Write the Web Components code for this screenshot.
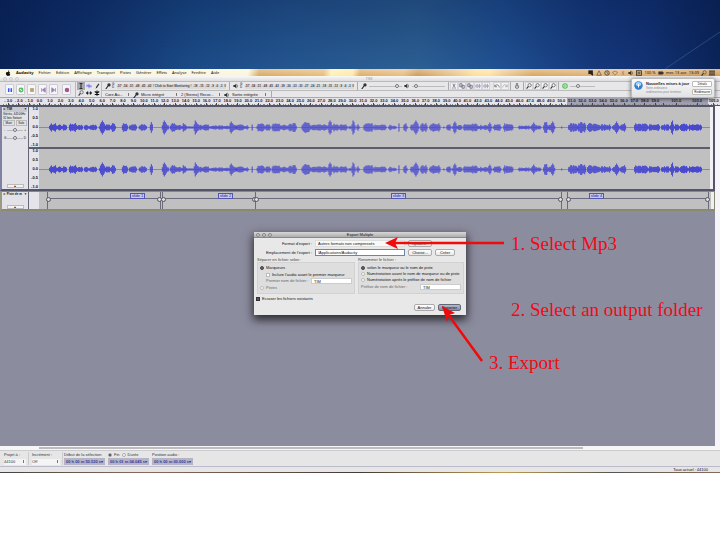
<!DOCTYPE html>
<html lang="fr">
<head>
<meta charset="utf-8">
<title>Audacity – Export Multiple</title>
<style>
html,body{margin:0;height:100%}
body{background:#fff;font:4px/6px "Liberation Sans",Arial,sans-serif;color:#111}
</style>
</head>
<body>
<tutorial-slide></tutorial-slide>
<script>
const BASE = `
*{box-sizing:border-box}
:host{display:block;box-sizing:border-box}
button,input,select{font:inherit;color:inherit;margin:0;padding:0;border:0;background:none;border-radius:0;min-width:0}
select{appearance:none}
svg{display:block;flex:none}
input[type=range]{appearance:none;height:6px;background:linear-gradient(#bbb,#bbb) 0 3px/100% 1px no-repeat}
input[type=range]::-webkit-slider-thumb{appearance:none;width:4px;height:4px;border-radius:50%;border:1px solid #777;background:#eee}
`;
function define(name, css, html, setup){
  customElements.define(name, class extends HTMLElement{
    constructor(){
      super();
      this.attachShadow({mode:'open'}).innerHTML = `<style>${BASE}${css}</style>${html}`;
    }
    connectedCallback(){ if(setup) setup(this, this.shadowRoot); }
  });
}

const ICONS = {
  apple:'<path d="M4 3c1-1 2.400-.5 2.700.1-1 .8-.8 2.200.3 2.700C6.500 7 6 8 5.200 8 4.500 7.700 4 7.700 3.300 8 2.200 8 .7 5.300 1.300 3.800 1.800 2.600 3 2.500 4 3zM4 2.500C4 1.300 4.600.6 5.500.3 5.600 1.400 5 2.300 4 2.500z" fill="#111"/>',
  pause:'<path d="M2.300 1.500v5M5.700 1.500v5" stroke="#3658e8" stroke-width="2"/>',
  play:'<circle cx="4" cy="4" r="2.500" fill="none" stroke="#4cb84c" stroke-width="1.500"/><path d="M2 6l4-4" stroke="#4cb84c"/>',
  stop:'<rect x="1.500" y="1.500" width="5" height="5" fill="#b9a074"/>',
  back:'<path d="M7 1v6L3 4zM2 1.500v5" fill="#9a80b4" stroke="#9a80b4"/>',
  fwd:'<path d="M1 1v6l4-3zM6 1.500v5" fill="#9a80b4" stroke="#9a80b4"/>',
  rec:'<circle cx="4" cy="4" r="3" fill="#a5568c"/>',
  beam:'<path d="M2 .5h4M2 7.500h4M4 .5v7" stroke="#222" stroke-width="1.300"/>',
  env:'<path d="M0 4h8M4 1v6M1 2.500l6 3" stroke="#5b6cf0" fill="none"/>',
  pen:'<path d="M2 7.500L3 5 6 .8 7 1.500 4.200 6z" fill="#222"/>',
  zoom:'<circle cx="4.800" cy="3" r="2.200" fill="none" stroke="#555"/><path d="M3.200 4.600L.8 7.500" stroke="#333" stroke-width="1.400"/>',
  arrows:'<path d="M0 4l2.500-2v4zM8 4L5.500 2v4zM2 4h4" fill="#111" stroke="#111" stroke-width=".6"/>',
  star:'<path d="M4 .5v7M1 2l6 4M7 2L1 6" stroke="#111" stroke-width="1.500"/>',
  mic:'<path d="M4 4L1 8" stroke="#222" stroke-width="1.500"/><circle cx="5.300" cy="2.500" r="2.200" fill="#333"/>',
  spk:'<path d="M.5 2.800h2l2-2v6.400l-2-2h-2z" fill="#333"/><path d="M5.600 2q1.400 2 0 4" fill="none" stroke="#555" stroke-width=".8"/>',
  cut:'<path d="M2.500 1l2 4.500M5.500 1l-2 4.500" stroke="#667"/><circle cx="2.500" cy="6.500" r="1" fill="#88a"/><circle cx="5.500" cy="6.500" r="1" fill="#88a"/>',
  copy:'<path d="M1 1h3v4H1zM4 3h3v4H4z" fill="#d8d8e4" stroke="#667"/>',
  wave:'<path d="M0 4h1M1.500 2v4M3 1v6M4.500 2.500v3M6 1v6M7.200 3v2" stroke="#88a" stroke-width=".9"/>',
  undo:'<path d="M1 2v3h3M1.300 4.700C2 1.500 7 1.500 7 6" fill="none" stroke="#777" stroke-width="1.100"/>',
  redo:'<path d="M7 2v3H4M6.700 4.700C6 1.500 1 1.500 1 6" fill="none" stroke="#aaa" stroke-width="1.100"/>',
  lock:'<circle cx="4" cy="5" r="2.200" fill="none" stroke="#555"/><path d="M2.500 1h3M4 1v2M4 5V3.800" stroke="#555"/>',
  sync:'<circle cx="4" cy="4" r="3" fill="none" stroke="#52c052" stroke-width="1.400"/><path d="M3 2.500L5.500 4 3 5.500z" fill="#52c052"/>',
  box:'<rect x=".5" y=".5" width="6" height="5" fill="#222"/><path d="M2 2l4.500 5" stroke="#222" stroke-width="2"/>',
  tri:'<path d="M4 1l3 6H1z" fill="none" stroke="#654"/>',
  clock:'<circle cx="4" cy="4" r="3" fill="none" stroke="#333"/><path d="M4 2v2l1.500 1" fill="none" stroke="#333" stroke-width=".8"/>',
  wifi:'<path d="M.5 3q3.500-3 7 0L4 7z" fill="none" stroke="#876"/>',
  bt:'<path d="M2 2.500l3.500 3L4 7V1l1.500 1.500L2 5.500" fill="none" stroke="#a87" stroke-width=".8"/>',
  cal:'<rect x=".7" y="1" width="6.600" height="6" fill="none" stroke="#222"/><path d="M2 3h4M2 5h4" stroke="#222"/>',
  bat:'<rect x=".5" y="2" width="6" height="4" fill="#333"/><path d="M7.200 3v2" stroke="#333"/>',
  list:'<path d="M0 1.500h8M0 4h8M0 6.500h8" stroke="#222" stroke-width="1.300"/>'
};
customElements.define('ui-icon', class extends HTMLElement{
  constructor(){ super(); this.attachShadow({mode:'open'}); }
  connectedCallback(){
    const s = this.getAttribute('size') || 6;
    this.shadowRoot.innerHTML = `<style>:host{display:inline-flex;flex:none}svg{display:block}</style><svg width="${s}" height="${s}" viewBox="0 0 8 8" aria-hidden="true">${ICONS[this.getAttribute('name')]}</svg>`;
  }
});
const ic = (n,s) => `<ui-icon name="${n}" size="${s||6}"></ui-icon>`;

define('slide-banner', `
:host{height:69px;flex:none;background:
  linear-gradient(rgba(4,22,66,.3),rgba(4,22,66,0)),
  linear-gradient(90deg,#0a2458 0,#10316c 12%,#1a4a86 26%,#245690 40%,#2c5f93 58%,#1f5092 70%,#15397c 82%,#123274 90%,#0b2458)}
svg{width:60px;height:39px;margin-left:auto}
div{display:flex;height:100%;align-items:flex-end}`,
`<div><svg viewBox="0 0 60 39" aria-hidden="true"><path d="M5 39Q30 22 60 2" stroke="#3d5f98" stroke-opacity=".6" fill="none"/></svg></div>`);

define('mac-menubar', `
:host{flex:none;font-family:"Noto Sans","Liberation Sans",sans-serif;background:linear-gradient(rgba(255,255,255,.35),rgba(255,255,255,0)),
 linear-gradient(100deg,#faf5dc 0 34.500%,#d9aa62 36%,#e8bc78 45%,#fff0b4 46%,#ffe9a8 49%,#dfae66 50%,#e7bd80 56%,#cf9c5a 58%,#e9c48c 63%,#ffe09a 66%,#ffe2a0 68%,#edca92 70%,#d8a760 74%,#e2b478 86%,#d09c56)}
nav{display:flex;align-items:center;height:7px;padding:0 5px;gap:5px}
a{color:#111;text-decoration:none;white-space:nowrap}
b{font-weight:bold}
.r{margin-left:auto;display:flex;gap:2px;align-items:center;white-space:nowrap}`,
`<nav>${ic('apple')}<a href="#"><b>Audacity</b></a>${['Fichier','Edition','Affichage','Transport','Pistes','Générer','Effets','Analyse','Fenêtre','Aide'].map(t=>`<a href="#">${t}</a>`).join('')}
<span class="r">${['box','tri','clock','wifi','bt'].map(n=>ic(n)).join('')}${ic('spk')}${ic('cal')}<span>100 %</span>${ic('bat')}<span>mer. 13 avr.&ensp;13:09</span>${ic('zoom')}${ic('list')}</span></nav>`);

const combo = (label,t,c) => `<select class="${c}" aria-label="${label}"><option>${t}</option></select>`;
define('audio-toolbar', `
:host{flex:none;background:#e7e7ea}
.title{height:5px;line-height:5px;text-align:center;color:#999;background:linear-gradient(#f8f8f8,#dcdcdf);display:flex;align-items:center;gap:2px;padding:0 3px}
.title i{width:4px;height:4px;border:1px solid #ccc;border-radius:50%}
.title span{flex:1}
.bars{display:flex;height:17px;border-top:1px solid #bbb;border-bottom:1px solid #aaa}
.tr{display:flex;align-items:center;gap:2px;padding:0 4px 0 5px;border-right:1px solid #bbb}
.tr button{width:9px;height:11px;background:#f6f6f8;border:1px solid #ccccd2;border-radius:1px;display:grid;place-items:center}
.tr button:last-child{margin-left:2px}
.tools{display:grid;grid-template-columns:repeat(3,8px);border-right:1px solid #bbb;padding-left:1px}
.tools button{display:grid;place-items:center}
.tools .on{background:#a8a8ae}
.rows{flex:1;min-width:0;display:grid;grid-template-rows:9px 7px}
.row{display:flex;align-items:stretch}
.g{display:flex;align-items:center;gap:2px;padding:0 3px;border-right:1px solid #aaa;white-space:nowrap}
.row:first-child{border-bottom:1px solid #bbb}
.m{width:128px;border-right:1px solid #aaa;padding:0 3px;display:flex;align-items:center;gap:1px;white-space:nowrap}
.ch{font-size:3px;line-height:3px;width:4px}
.sc{flex:1;display:flex;justify-content:space-between;font-size:3px;font-weight:bold;color:#444;background:#dadadd;line-height:5px}
.g.s input{width:33px}
.g.last{border:0}.g.last input{width:25px}
.e{gap:0;padding:0 1px}
.e button{width:8px;height:8px;background:#f2f2f4;border:1px solid #d4d4d8;display:grid;place-items:center}
.gap{margin-left:3px}
select{height:6px;line-height:6px;background:linear-gradient(#777,#777) right 2px center/1px 3px no-repeat}
.w1{width:26px}.w2{width:38px}.w3{width:41px}.w4{width:36px}`,
`<div class="title"><i></i><i></i><i></i><span>TIM</span></div>
<div class="bars">
<div class="tr">${[['Pause','pause'],['Lecture','play'],['Stop','stop'],['Début','back'],['Fin','fwd'],['Enregistrer','rec']].map(b=>`<button aria-label="${b[0]}">${ic(b[1])}</button>`).join('')}</div>
<div class="tools">${['beam','env','pen','zoom','arrows','star'].map((n,i)=>`<button aria-label="Outil ${i+1}" class="${i?'':'on'}">${ic(n)}</button>`).join('')}</div>
<div class="rows">
<div class="row">
<div class="m">${ic('mic')}<span class="ch">G<br>D</span><span class="sc">${[-57,-54,-51,-48,-45,-42].map(n=>`<span>${n}</span>`).join('')}<span>! Click to Start Monitoring !</span>${[-18,-15,-12,-9,-6,-3,0].map(n=>`<span>${n}</span>`).join('')}</span></div>
<div class="m">${ic('spk')}<span class="ch">G<br>D</span><span class="sc">${Array.from({length:20},(_,i)=>`<span>${i*3-57}</span>`).join('')}</span></div>
<div class="g s">${ic('mic')}<input type="range" aria-label="Volume entrée" value="88">${ic('spk')}<input type="range" aria-label="Volume sortie" value="8"></div>
<div class="g e">${['cut','copy','copy','wave','wave'].map(n=>`<button aria-label="${n}">${ic(n)}</button>`).join('')}<span class="gap"></span><button aria-label="Annuler">${ic('undo')}</button><button aria-label="Refaire">${ic('redo')}</button></div>
<div class="g">${ic('lock')}</div><div class="g e">${['zoom','zoom','zoom','zoom'].map((n,i)=>`<button aria-label="Zoom ${i+1}">${ic(n)}</button>`).join('')}</div>
<div class="g last">${ic('sync')}<input type="range" aria-label="Vitesse" value="30"></div>
</div>
<div class="row"><div class="g">${combo('Hôte audio','Core Au...','w1')}${ic('mic')}${combo('Entrée','Micro intégré','w2')}${combo('Canaux','2 (Stereo) Recor...','w3')}${ic('spk')}${combo('Sortie','Sortie intégrée','w4')}</div></div>
</div></div>`);

define('time-ruler', `
:host{flex:none;background:#e4e4ea;border-bottom:1px solid #55556a}
div{display:flex;height:7px;padding-left:3px;font-weight:bold;line-height:5px;color:#222}
span{flex:1 1 0;min-width:0;display:flex;justify-content:center;white-space:nowrap;background:
 linear-gradient(#444,#444) center bottom/1px 2px no-repeat,repeating-linear-gradient(90deg,#888 0 1px,#0000 1px 3px) 0 100%/100% 1px no-repeat}
.w{flex-grow:2}.h{flex-grow:.5}.l{flex-grow:1.200}
.sel{background-color:#a2a2b2}`,
`<div></div>`, (el,r)=>{
  const cells=[];
  for(let i=-3;i<60;i++) cells.push(`<span class="${i>50?'sel':''}">${i<0?'- '+(-i):i}.0</span>`);
  r.querySelector('div').innerHTML = cells.join('')+'<span class="h sel"></span><span class="w sel">101.0</span><span class="w sel">103.0</span><span class="l">105.0</span>';
});

/* Speech bursts: [start, end, height, optional peak position] on a 672-unit timeline. */
const BURSTS=[[10,17,4],[18,22,3],[23,27,3],[30,37,4],[38,43,3],[45,49,3],[50,57,3],[60,66,7,63],[66,71,3],[72,76,4],[83,88,4],[90,97,3],[100,107,3],[111,113,5],[123,129,7,125],[131,137,4],[138,142,3],[143,147,4],[148,154,1],[155,162,7,156],[163,170,3],[171,189,2],[190,197,6,192],[197,205,3],[206,209,2],[213,213,3],[218,225,4],[226,231,3],[233,241,4],[242,248,3],[249,257,4],[263,271,5],[272,288,3],[289,293,7,291],[294,299,4],[300,308,3],[310,312,2],[313,316,7,314],[318,320,3],[325,334,4],[335,347,3],[350,353,3],[354,357,2],[360,360,5],[365,368,4],[372,380,7,377],[382,388,4],[391,401,4],[405,405,1],[408,412,3],[414,418,6,416],[419,423,3],[425,439,4],[440,453,5,451],[455,462,3],[465,474,4],[480,491,2],[492,502,5,495],[505,509,5],[510,516,6,514],[523,523,1],[530,539,4],[539,547,5],[549,561,4],[562,572,3],[574,581,6,578],[582,587,4],[596,609,4],[610,621,3],[623,631,3],[632,635,7,634],[636,641,3],[642,649,4],[650,663,3]];
const wavePath = (()=>{
  let d='';
  BURSTS.forEach(([a,b,h,p])=>{
    for(let x=a;x<=b;x++){
      const n=Math.abs(Math.sin(x*12.9898)*43758.5453)%1;
      let v = p===undefined ? h*(.65+.45*n) : Math.max(h-Math.abs(x-p)*1.600, h*.45*(.6+.6*n));
      if((x===a||x===b)&&a!==b) v*=.6;
      v=Math.max(1,v);
      d+=`M${x+.5} ${(20.5-v).toFixed(1)}v${(2*v).toFixed(1)}`;
    }
  });
  return d;
})();
const wave=`<svg viewBox="0 0 672 40" preserveAspectRatio="none" aria-hidden="true"><path d="M0 20.500h672" stroke="#8484c8" fill="none"/><path d="${wavePath}" stroke="#4646d0" fill="none"/></svg>`;
const scale=`<div class="scale"><span>1.0</span><span>0.5</span><span>0.0</span><span>-0.5</span><span>-1.0</span></div>`;

define('audio-track', `
:host{flex:none;background:#f6f6fa}
.t{display:grid;grid-template-columns:27px 10px 1fr 3px;margin-right:5px;border:2px solid #55556a;border-top-width:1px;border-left:2px solid #8080a0}
.p{background:#e2e2e8;border-right:1px solid #667;display:flex;flex-direction:column;padding:0 1px;line-height:4px;font-size:3px;white-space:nowrap;overflow:hidden}
.name{display:flex;justify-content:space-between;background:#c8c8d0;line-height:5px;font-weight:bold}
.ms{display:flex;gap:1px}.ms button{flex:1;border:1px solid #bbb;line-height:4px;height:6px}
.p label{display:flex;justify-content:space-between;margin:1px 1px 0;line-height:7px}
.p input{width:16px}
.p .up{margin:auto auto 1px;width:17px;height:4px;border:1px solid #bbb;background:#f2f2f4;line-height:2px}
.chs{display:grid;grid-template-rows:40px 40px;row-gap:2px;background:#5c5c6c}
.scale{display:flex;flex-direction:column;justify-content:space-between;text-align:right;padding-right:1px;font-weight:bold;font-size:4px;line-height:4px;background:#e4e4ea}
.w{background:#c0c0c0}
svg{width:100%;height:40px}
.end{background:#f0f0f2}`,
`<div class="t"><div class="p"><span class="name"><span>✕ TIM</span><span>▼</span></span><span>Stéréo, 44100Hz</span><span>32 bits flottant</span><div class="ms"><button>Muet</button><button>Solo</button></div>
<label>-<input type="range" aria-label="Gain">+</label><label>G<input type="range" aria-label="Balance">D</label><button class="up" aria-label="Réduire">▲</button></div>
<div class="chs">${scale}${scale}</div><div class="chs"><div class="w">${wave}</div><div class="w">${wave}</div></div><div class="end"></div></div>`);

define('label-track', `
:host{flex:none;background:#f6f6fa}
.t{display:grid;grid-template-columns:27px 10px 1fr 3px;height:20px;margin-right:5px;border:1px solid #8a8a70;border-left:2px solid #9a9a80;border-bottom:2px solid #8a8a70}
.p{background:#e2e2e8;border-right:1px solid #667;display:flex;flex-direction:column;font-size:3px;line-height:5px;font-weight:bold;padding:0 1px;white-space:nowrap;overflow:hidden}
.p span{display:flex;justify-content:space-between}
.p i{font-style:normal}
.p button{margin:auto auto 0;width:17px;height:4px;border:1px solid #bbb;background:#f2f2f4;line-height:2px}
.s{background:#e4e4ea}.end{background:#f0f0f2}
.c{position:relative;background:#c0c0c0}
.r{position:absolute;top:0;bottom:0;border:solid #6a6a78;border-width:0 1px;background:linear-gradient(#6a6a80,#6a6a80) 0 6px/100% 1px no-repeat}
.r::before,.r::after{content:"";position:absolute;top:5px;width:3px;height:3px;border:1px solid #556;border-radius:50%;background:#ddd}
.r::before{left:-2px}.r::after{right:-2px}
.n{position:absolute;top:1px;width:15px;height:6px;border:1px solid #5555b0;background:#c8c8f0;color:#22228a;font-size:4px;line-height:4px;text-align:center;white-space:nowrap}`,
`<div class="t"><div class="p"><span><i>✕ Piste de m</i><i>▼</i></span><button aria-label="Réduire">▲</button></div><div class="s"></div><div class="c"></div><div class="end"></div></div>`,
(el,r)=>{
  const W=672, pc=v=>(v/W*100).toFixed(2)+'%';
  r.querySelector('.c').innerHTML=[[8,122],[123,217],[216,523],[528,670]].map(([a,b])=>`<div class="r" style="left:${pc(a)};width:${pc(b-a)}"></div>`).join('')
   +[91,179,352,550].map((x,i)=>`<span class="n" style="left:${pc(x)}">slide ${i+1}</span>`).join('');
});

define('selection-bar', `
:host{flex:none;background:#e6e6e6}
.sb{height:4px;background:linear-gradient(#bcbcc0,#bcbcc0) 39px 1px/calc(81% - 39px) 2px no-repeat,#f6f6f8}
.b{display:flex;gap:3px;height:17px;padding:1px 4px;color:#333;border-top:1px solid #ccc;border-bottom:1px solid #bbc}
.b>div{display:flex;flex-direction:column;justify-content:space-around;white-space:nowrap}
.b>div:nth-child(-n+2){padding-right:2px;border-right:1px solid #ccc}
.b>div:nth-child(3){margin-left:-2px}
select{height:6px;background:linear-gradient(#777,#777) right 2px center/1px 3px no-repeat #f4f4f4;line-height:6px}
.w1{width:22px}.w2{width:28px}
.d{width:41px;height:7px;background:#b4b4c4;color:#3a3a9a;font-weight:bold;text-align:center}
.h{display:flex;gap:2px;align-items:center}
input[type=radio]{appearance:none;width:4px;height:4px;border:1px solid #aaa;border-radius:50%;background:#fff}
input:checked{background:#444}
.h label{display:flex;gap:2px;align-items:center}
.st{height:5px;line-height:5px;text-align:right;padding-right:12px;border-bottom:0}
.dock{height:1px;background:linear-gradient(90deg,#444 0,#8a6a5a 20%,#443a3a 50%,#c09a50 70%,#555 85%,#8a6a5a)}`,
`<div class="sb"></div><div class="b">
<div><label for="p">Projet à :</label><select id="p" class="w1"><option>44100</option></select></div>
<div><label for="i">Incrément :</label><select id="i" class="w2"><option>Off</option></select></div>
<div><label for="d">Début de la sélection</label><input id="d" class="d" value="00 h 00 m 50.520 s▾"></div>
<div><span class="h"><label><input type="radio" name="f" checked>Fin</label><label><input type="radio" name="f">Durée</label></span><input aria-label="Fin" class="d" value="00 h 01 m 04.045 s▾"></div>
<div><label for="a">Position audio :</label><input id="a" class="d" value="00 h 00 m 00.000 s▾"></div></div>
<div class="st">Taux actuel : 44100</div><div class="dock"></div>`);

define('update-notice', `
:host{background:linear-gradient(#fafafa,#e2e2e4);border:1px solid #bbb;border-radius:2px;box-shadow:0 1px 4px rgba(0,0,0,.6);width:84px}
div{display:grid;grid-template-columns:9px 1fr 20px;gap:3px;padding:2px;align-items:start}
p{margin:0;white-space:nowrap;line-height:4px;font-size:3px;color:#888}
b{display:block;font-size:4px;line-height:5px;color:#222}
.bt{display:grid;gap:2px}
button{height:6px;border:1px solid #bbb;border-radius:1px;background:#fff;font-size:3px;line-height:4px;white-space:nowrap}`,
`<div><svg width="9" height="9" viewBox="0 0 9 9" aria-hidden="true"><circle cx="4.500" cy="4.500" r="4.200" fill="#2f7fd6"/><ellipse cx="4.500" cy="3" rx="2.800" ry="2" fill="#a8d2f8"/><path d="M4.500 3v3.500" stroke="#fff"/></svg>
<p><b>Nouvelles mises à jour</b>Votre ordinateur<br>redémarrera pour terminer</p><span class="bt"><button>Détails</button><button>Redémarrer</button></span></div>`);

define('export-dialog', `
:host{width:212px;background:#e8e8e8;box-shadow:0 4px 9px 1px rgba(0,0,0,.7);color:#111}
header{display:grid;grid-template-columns:18px 1fr 18px;align-items:center;height:6px;line-height:6px;background:linear-gradient(#d8d8d8,#adadad);text-align:center;border-bottom:1px solid #888}
header span{display:flex;gap:2px;padding-left:2px}
header i{width:4px;height:4px;border:1px solid #888;border-radius:50%;background:#ccc}
.f{display:grid;grid-template-columns:58px 90px 24px 20px;column-gap:3px;row-gap:2px;padding:2px 0 1px;align-items:center}
.f>label{text-align:right;white-space:nowrap}
.f select,.f input{width:100%;height:7px;background:#f8f8f8;padding-left:2px;border:1px solid #ddd}
.f input{border:1px solid #6a86a8;background:#fff}
button{height:7px;border:1px solid #aaa;border-radius:2px;background:linear-gradient(#fff,#e8e8e8);line-height:5px;white-space:nowrap}
.g{display:grid;grid-template-columns:98px 1fr;gap:3px;padding:0 2px 0 3px}
fieldset{min-width:0;margin:0;padding:0;border:0}
legend{padding:0;line-height:5px;color:#444}
.box{display:flex;flex-direction:column;background:#dedede;border:1px solid #d2d2d2;height:32px;padding:2px}
.l{display:flex;align-items:center;gap:2px;height:7px;white-space:nowrap}
.right .l{height:6px}
.right .l:last-child{height:8px}
.l.in{padding-left:6px}
.l.dim{color:#666}
input[type=radio],input[type=checkbox]{appearance:none;flex:none;width:4px;height:4px;border:1px solid #bbb;background:#fff}
input[type=radio]{border-radius:50%}
input[type=radio]:checked{border-color:#444;background:#667}
input[type=checkbox]:checked{border-color:#333;background:#556}
.l input:not([type]){width:41px;height:6px;background:#fff;border:1px solid #ccc;margin-left:auto;padding-left:2px;line-height:4px;color:#222}
footer{display:flex;justify-content:flex-end;gap:3px;padding:2px 5px 4px}
footer button{width:21px}
footer .ok{width:23px;background:linear-gradient(#b4bccc,#7c8ca8);border-color:#667}
.e{padding:2px 2px 0;height:8px}`,
`<header><span><i></i><i></i><i></i></span>Export Multiple</header>
<div class="f"><label for="a">Format d'export :</label><select id="a"><option>Autres formats non compressés</option></select><button>Options...</button><span></span>
<label for="b">Emplacement de l'export :</label><input id="b" value="/Applications/Audacity"><button>Choisir...</button><button>Créer</button></div>
<div class="g"><fieldset><legend>Séparer en fichier selon :</legend><div class="box">
<label class="l"><input type="radio" name="s" checked>Marqueurs</label>
<label class="l in"><input type="checkbox">Inclure l'audio avant le premier marqueur</label>
<label class="l in dim">Premier nom de fichier :<input value="TIM"></label>
<label class="l dim"><input type="radio" name="s">Pistes</label></div></fieldset>
<fieldset class="right"><legend>Renommer le fichier :</legend><div class="box">
<label class="l"><input type="radio" name="r" checked>selon le marqueur ou le nom de piste</label>
<label class="l"><input type="radio" name="r">Numérotation avant le nom de marqueur ou de piste</label>
<label class="l"><input type="radio" name="r">Numérotation après le préfixe de nom de fichier</label>
<label class="l dim">Préfixe de nom de fichier :<input value="TIM"></label></div></fieldset></div>
<label class="l e"><input type="checkbox" checked>Ecraser les fichiers existants</label>
<footer><button>Annuler</button><button class="ok">Exporter</button></footer>`);

define('step-note', `:host{position:absolute;color:#f00a14;font:19px/22px "Liberation Serif","Times New Roman",serif;white-space:nowrap}`, `<slot></slot>`);

define('tutorial-slide', `
:host{display:flex;flex-direction:column;min-height:100vh;padding-bottom:67px;position:relative;overflow:hidden}
.desk{flex:1;background:#8c8c9f;border-right:5px solid #f6f6fa}
update-notice{position:absolute;right:5px;top:78px}
export-dialog{position:absolute;left:254px;top:232px}
.arrows{position:absolute;left:380px;top:230px}
.n1{left:511px;top:233px}.n2{left:511px;top:299px}.n3{left:489px;top:352px}`,
`<slide-banner></slide-banner><mac-menubar></mac-menubar><audio-toolbar></audio-toolbar><time-ruler></time-ruler><audio-track></audio-track><label-track></label-track><div class="desk"></div><selection-bar></selection-bar>
<update-notice></update-notice><export-dialog></export-dialog>
<svg class="arrows" width="130" height="140" viewBox="0 0 130 140" aria-hidden="true"><g stroke="#f00a0a" stroke-width="2.500" fill="#f00a0a"><path d="M124 13H14M102 131L67 83"/><path stroke="none" d="M5 13l13-6-3 6 3 6zM62 76l13 7-6 2-2 7z"/></g></svg>
<step-note class="n1">1. Select Mp3</step-note><step-note class="n2">2. Select an output folder</step-note><step-note class="n3">3. Export</step-note>`);
</script>
</body>
</html>
